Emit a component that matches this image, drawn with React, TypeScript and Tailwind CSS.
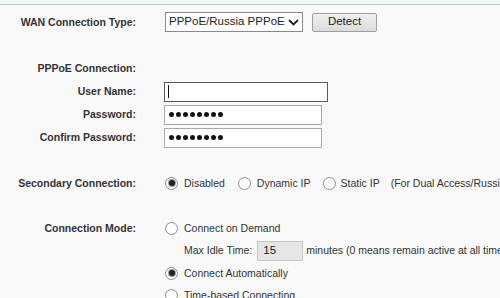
import React from "react";

function Radio({ checked = false }: { checked?: boolean }) {
  return (
    <span className="relative flex h-[13px] w-[13px] shrink-0 items-center justify-center rounded-full border border-[#8e8e8e] bg-white">
      {checked && <span className="h-[6px] w-[6px] rounded-full bg-[#222] ring-1 ring-[#9a9a9a]" />}
    </span>
  );
}

function Dots() {
  return (
    <div className="flex items-center gap-[2px] pl-[4px]">
      {Array.from({ length: 8 }).map((_, i) => (
        <span key={i} className="h-[5px] w-[5px] rounded-full bg-[#111]" />
      ))}
    </div>
  );
}

function Row({ label, h = "h-[23px]", children }: { label?: string; h?: string; children?: React.ReactNode }) {
  return (
    <div className={`flex items-center ${h}`}>
      <div className="w-[136px] shrink-0 whitespace-nowrap text-right font-bold">{label}</div>
      <div className="ml-[29px] flex items-center whitespace-nowrap">{children}</div>
    </div>
  );
}

export default function App() {
  return (
    <div className="w-[500px] h-[298px] overflow-hidden bg-[#f9f9f9] text-[10.5px] leading-none text-[#333] [font-family:'Liberation_Sans',Arial,sans-serif]">
      {/* top frame edge */}
      <div className="h-[5px] border-b border-[#a9d3c3] bg-[#f1f5f3]" />

      <div className="mt-[6px]">
        <Row label="WAN Connection Type:" h="h-[22px]">
          <div className="flex h-[20px] w-[138px] items-center justify-between border border-[#8a8a8a] bg-white pl-[3px] pr-[3px] text-[11.5px] text-[#222]">
            <span>PPPoE/Russia PPPoE</span>
            <svg width="11" height="7" viewBox="0 0 11 7" fill="none" stroke="#222" strokeWidth="1.8">
              <path d="M1 1l4.5 4.5L10 1" />
            </svg>
          </div>
          <button className="ml-[9px] h-[19px] w-[65px] rounded-[2px] border border-[#9e9e9e] bg-gradient-to-b from-[#f0f0f0] to-[#dcdcdc] text-[11.5px] text-[#222]">
            Detect
          </button>
        </Row>
      </div>

      <div className="mt-[24px]">
        <Row label="PPPoE Connection:" />
        <Row label="User Name:">
          <div className="-ml-[1px] flex h-[20px] w-[164px] items-center border border-[#5a5a5a] bg-white pl-[3px]">
            <span className="h-[13px] w-px bg-[#111]" />
          </div>
        </Row>
        <Row label="Password:">
          <div className="-ml-[1px] flex h-[20px] w-[158px] items-center border border-[#a9a9a9] bg-white">
            <Dots />
          </div>
        </Row>
        <Row label="Confirm Password:">
          <div className="-ml-[1px] flex h-[20px] w-[158px] items-center border border-[#a9a9a9] bg-white">
            <Dots />
          </div>
        </Row>
      </div>

      <div className="mt-[23px]">
        <Row label="Secondary Connection:" h="h-[22px]">
          <Radio checked />
          <span className="ml-[6px]">Disabled</span>
          <span className="ml-[13px]"><Radio /></span>
          <span className="ml-[6px]">Dynamic IP</span>
          <span className="ml-[12px]"><Radio /></span>
          <span className="ml-[5px]">Static IP</span>
          <span className="ml-[11px]">(For Dual Access/Russia PPPoE)</span>
        </Row>
      </div>

      <div className="mt-[23px]">
        <Row label="Connection Mode:" h="h-[22px]">
          <Radio />
          <span className="ml-[6px]">Connect on Demand</span>
        </Row>
        <Row>
          <span className="ml-[19px]">Max Idle Time:</span>
          <div className="ml-[5px] flex h-[20px] w-[46px] items-center border border-[#c6c6c6] bg-[#e6e6e6] pl-[5px] text-[11.5px] text-[#222]">
            15
          </div>
          <span className="ml-[3px]">minutes (0 means remain active at all times.)</span>
        </Row>
        <Row h="h-[22px]">
          <Radio checked />
          <span className="ml-[6px]">Connect Automatically</span>
        </Row>
        <Row h="h-[22px]">
          <Radio />
          <span className="ml-[6px]">Time-based Connecting</span>
        </Row>
      </div>
    </div>
  );
}
